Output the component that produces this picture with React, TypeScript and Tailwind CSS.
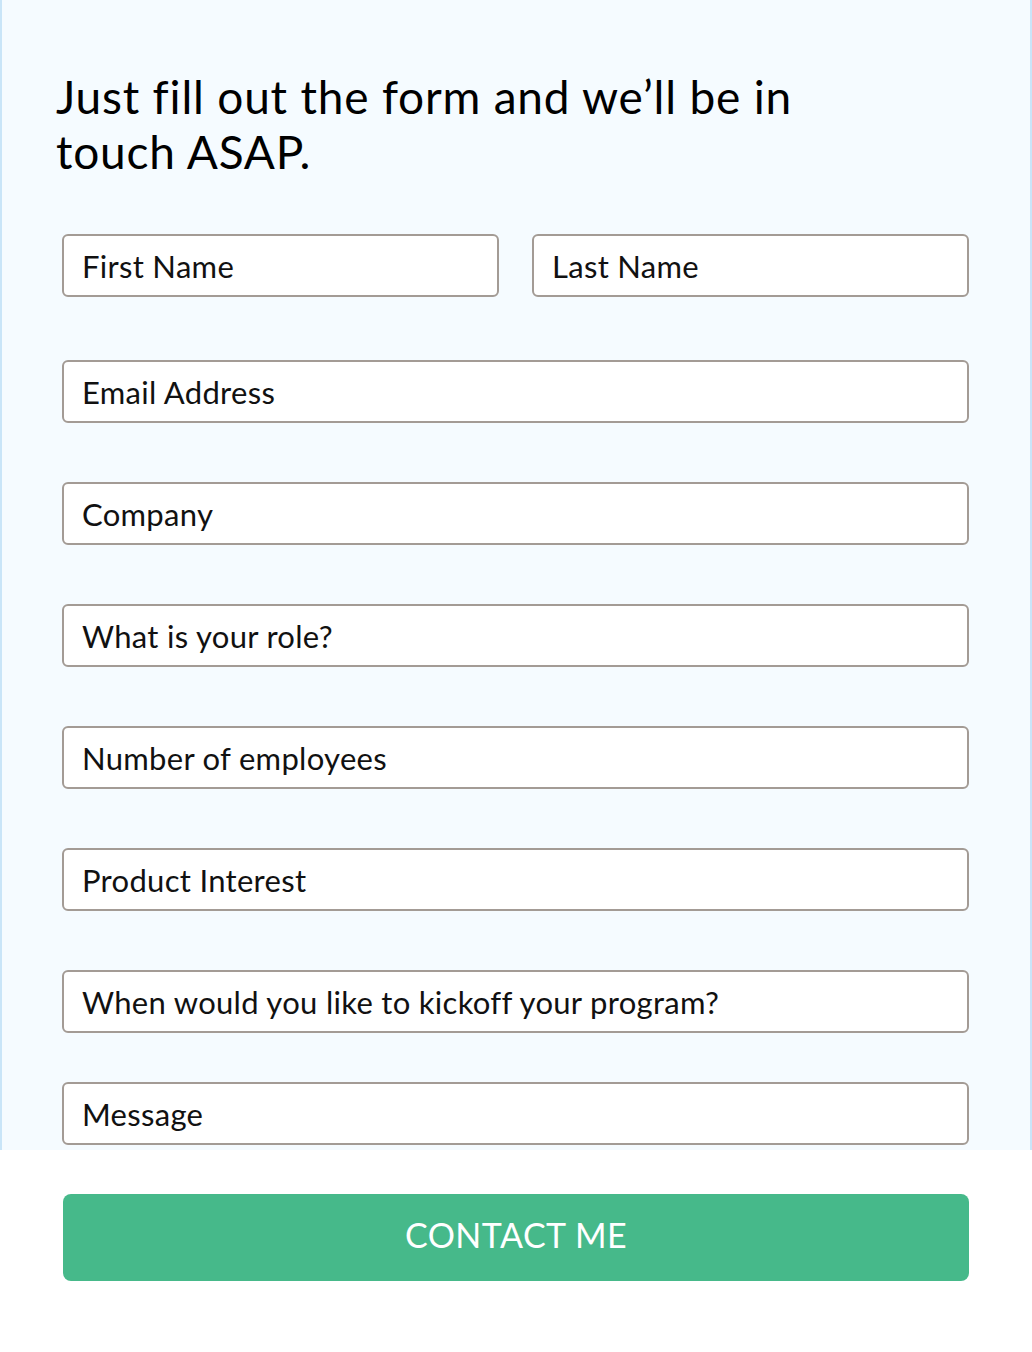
const fields = [
  "Email Address",
  "Company",
  "What is your role?",
  "Number of employees",
  "Product Interest",
  "When would you like to kickoff your program?",
];

function Field({ label }: { label: string }) {
  return (
    <input
      type="text"
      placeholder={label}
      className="w-full h-[63px] rounded-[6px] border-2 border-[#a39b95] bg-white px-[18px] text-[31px] tracking-[0.3px] text-black placeholder:text-[#111] outline-none"
    />
  );
}

export default function App() {
  return (
    <div className="w-[1032px] h-[1352px] bg-white font-['Lato',sans-serif]">
      <div className="h-[1150px] bg-[#f5fbff] border-x-2 border-[#c9e5f8] pt-[69px] pl-[54px] pr-[61px]">
        <h1 className="text-[46px] leading-[55px] tracking-[0.8px] font-normal text-black max-w-[800px]">
          Just fill out the form and we’ll be in touch ASAP.
        </h1>
        <form className="mt-[55px] pl-[6px] flex flex-col">
          <div className="grid grid-cols-2 gap-[33px] mb-[63px]">
            <Field label="First Name" />
            <Field label="Last Name" />
          </div>
          <div className="flex flex-col gap-[59px]">
            {fields.map((f) => (
              <Field key={f} label={f} />
            ))}
          </div>
          <div className="mt-[49px]">
            <Field label="Message" />
          </div>
        </form>
      </div>
      <div className="pt-[44px] pl-[63px] pr-[63px]">
        <button className="w-full h-[87px] rounded-[8px] bg-[#46b98a] text-white text-[34px] tracking-[0.5px] pb-[6px]">
          CONTACT ME
        </button>
      </div>
    </div>
  );
}
